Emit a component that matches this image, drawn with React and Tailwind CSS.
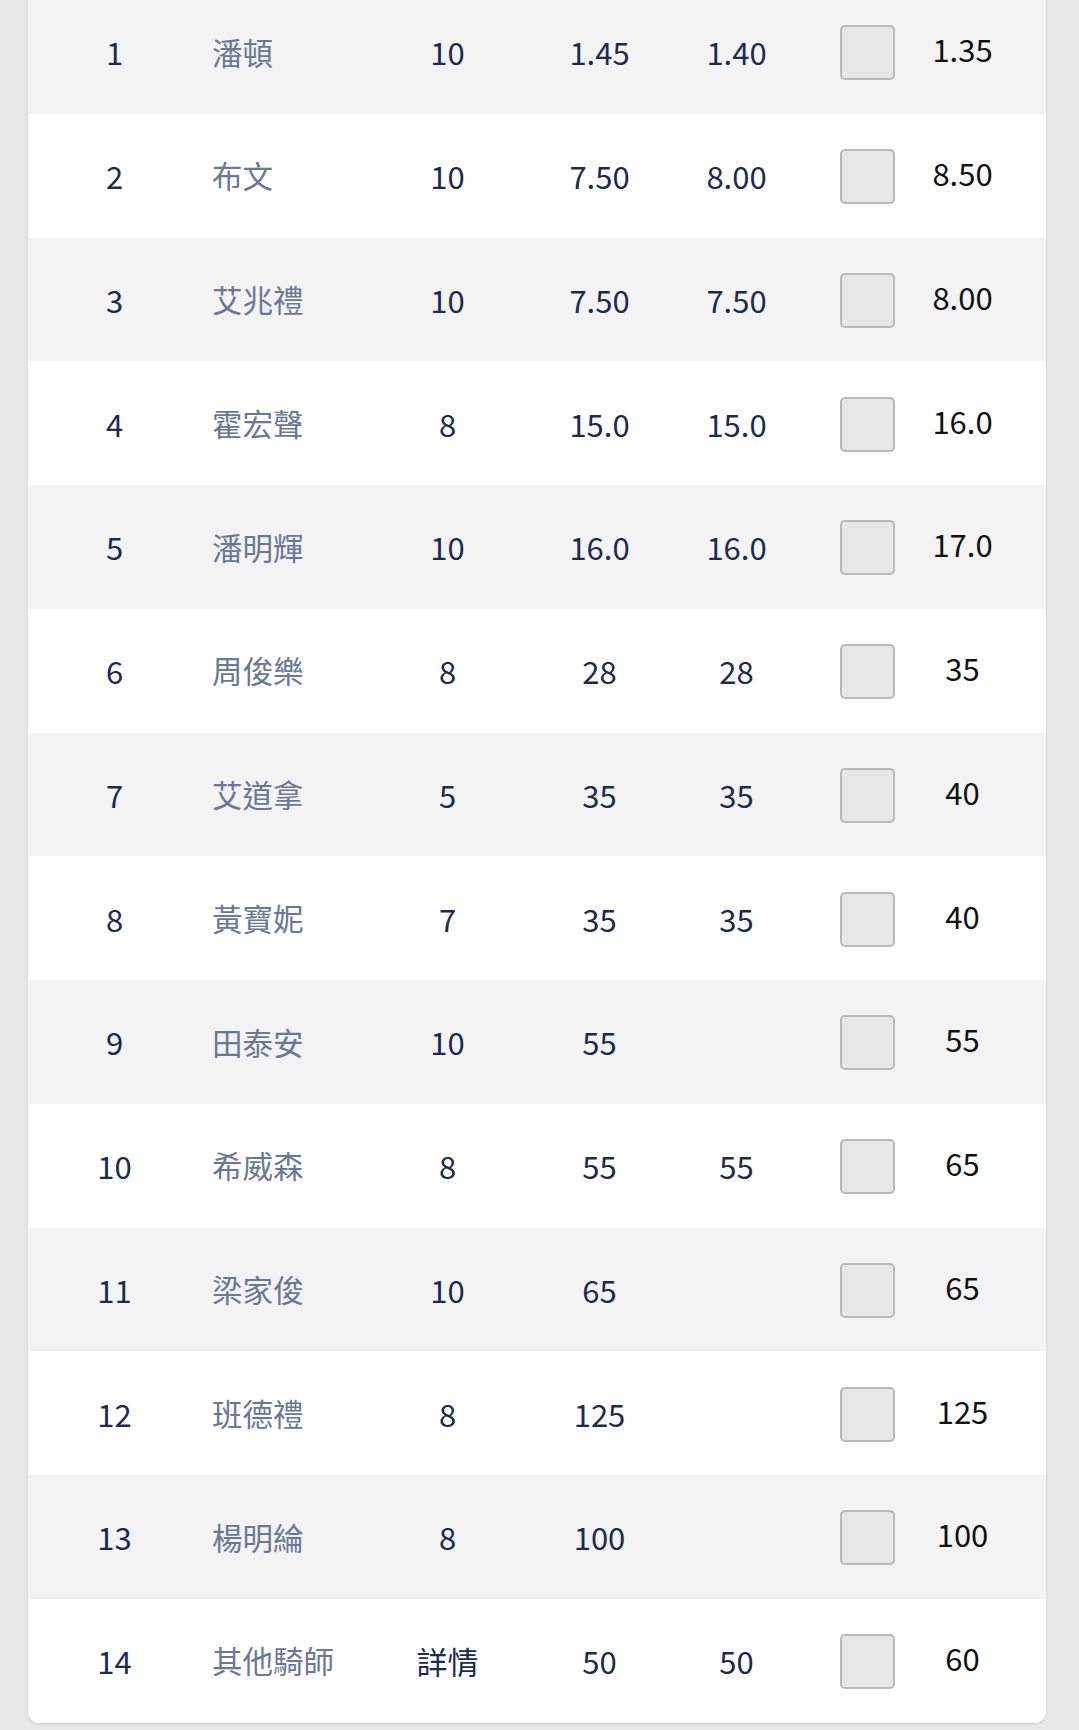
import React from "react";

const rows = [
  { no: 1, name: "潘頓", weight: "10", odds1: "1.45", odds2: "1.40", last: "1.35" },
  { no: 2, name: "布文", weight: "10", odds1: "7.50", odds2: "8.00", last: "8.50" },
  { no: 3, name: "艾兆禮", weight: "10", odds1: "7.50", odds2: "7.50", last: "8.00" },
  { no: 4, name: "霍宏聲", weight: "8", odds1: "15.0", odds2: "15.0", last: "16.0" },
  { no: 5, name: "潘明輝", weight: "10", odds1: "16.0", odds2: "16.0", last: "17.0" },
  { no: 6, name: "周俊樂", weight: "8", odds1: "28", odds2: "28", last: "35" },
  { no: 7, name: "艾道拿", weight: "5", odds1: "35", odds2: "35", last: "40" },
  { no: 8, name: "黃寶妮", weight: "7", odds1: "35", odds2: "35", last: "40" },
  { no: 9, name: "田泰安", weight: "10", odds1: "55", odds2: "", last: "55" },
  { no: 10, name: "希威森", weight: "8", odds1: "55", odds2: "55", last: "65" },
  { no: 11, name: "梁家俊", weight: "10", odds1: "65", odds2: "", last: "65" },
  { no: 12, name: "班德禮", weight: "8", odds1: "125", odds2: "", last: "125" },
  { no: 13, name: "楊明綸", weight: "8", odds1: "100", odds2: "", last: "100" },
  { no: 14, name: "其他騎師", weight: "詳情", odds1: "50", odds2: "50", last: "60" },
];

const Cell = ({ children, className = "" }) => (
  <div className={`flex justify-center whitespace-nowrap ${className}`}>{children}</div>
);

const OddsRow = ({ row, index }) => (
  <div
    className={`grid h-[123.75px] grid-cols-[173px_173px_147px_157px_117px_145px_45px_1fr] items-center ${
      index % 2 === 0 ? "bg-[#f3f3f3]" : "bg-white"
    }`}
  >
    <Cell className="text-[#1c2a4f]">{row.no}</Cell>
    <div className="whitespace-nowrap pl-[11px] text-[30.5px] text-[#6a7795]">{row.name}</div>
    <Cell className="text-[#1c2a4f]">{row.weight}</Cell>
    <Cell className="text-[#1c2a4f]">{row.odds1}</Cell>
    <Cell className="text-[#1c2a4f]">{row.odds2}</Cell>
    <Cell>
      <span className="mt-[2px] block h-[55px] w-[55px] rounded-[5px] border-2 border-[#b9b9b9] bg-[#e7e7e7]" />
    </Cell>
    <Cell className="-mt-[6px] text-[#111111]">{row.last}</Cell>
    <div />
  </div>
);

export default function App() {
  return (
    <div
      className="min-h-[1730px] overflow-hidden bg-[#e7e7e7] pl-[28px] pr-[33px] text-[31px] leading-none"
      style={{ fontFamily: '"Noto Sans CJK TC", "Noto Sans", sans-serif' }}
    >
      <div className="-mt-[10px] overflow-hidden rounded-b-[12px] bg-white shadow-sm">
        {rows.map((row, i) => (
          <OddsRow key={row.no} row={row} index={i} />
        ))}
      </div>
    </div>
  );
}
